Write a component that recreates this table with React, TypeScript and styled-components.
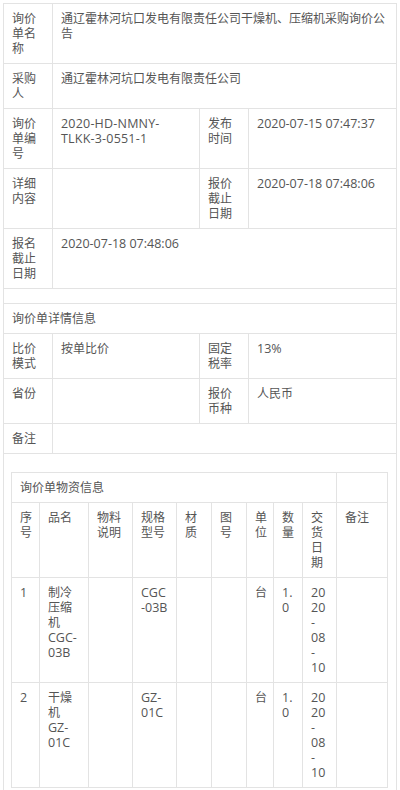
import React from "react";
import styled, { createGlobalStyle } from "styled-components";

const GlobalStyle = createGlobalStyle`
  html, body {
    margin: 0;
    padding: 0;
    background: #ffffff;
  }
  body {
    font-family: "Open Sans", "Noto Sans CJK SC", sans-serif;
    font-size: 12px;
    color: #555555;
  }
`;

const Page = styled.div`
  padding: 3px;
`;

const InfoTable = styled.table`
  border-collapse: collapse;
  table-layout: fixed;
  width: 394px;
`;

const Cell = styled.td`
  border: 1px solid #e3e3e3;
  padding: 7px 8px;
  vertical-align: top;
  line-height: 15px;
  font-size: 12px;
  color: #555555;
`;

const NestCell = styled(Cell)`
  padding: 7px;
`;

const ItemsTable = styled.table`
  border-collapse: collapse;
  table-layout: fixed;
  width: 377px;
  margin-top: 11px;
`;

const ItemCell = styled(Cell)`
  overflow-wrap: anywhere;
`;

/* Latin text (digits, codes) renders a touch larger than the CJK text */
const Latin = styled.span`
  font-family: "Open Sans", sans-serif;
  font-size: 12.5px;
  line-height: 15px;
  vertical-align: top;
`;

/* the inquiry code is set slightly looser */
const Code = styled(Latin)`
  letter-spacing: 0.2px;
`;

/* a date in a narrow column breaks piece by piece at its hyphens */
const DatePiece = styled(Latin)`
  display: inline-block;
  max-width: 100%;
  overflow-wrap: anywhere;
`;

const DateText = ({ value }: { value: string }) => {
  const parts = value.split("-");
  return (
    <>
      {parts.map((p, i) => (
        <DatePiece key={i}>{i < parts.length - 1 ? p + "-" : p}</DatePiece>
      ))}
    </>
  );
};

const outerCols = [49, 147, 49, 148];
const innerCols = [28, 49, 44, 44, 35, 35, 27, 29, 34, 51];

const headers = ["序号", "品名", "物料说明", "规格型号", "材质", "图号", "单位", "数量", "交货日期", "备注"];

type Item = {
  no: string;
  nameCn: string;
  nameCode: string;
  spec: string;
  unit: string;
  qty: string;
  date: string;
};

const items: Item[] = [
  { no: "1", nameCn: "制冷压缩机", nameCode: "CGC-03B", spec: "CGC-03B", unit: "台", qty: "1.0", date: "2020-08-10" },
  { no: "2", nameCn: "干燥机", nameCode: "GZ-01C", spec: "GZ-01C", unit: "台", qty: "1.0", date: "2020-08-10" },
];

export default function App() {
  return (
    <>
      <GlobalStyle />
      <Page>
        <InfoTable>
          <colgroup>
            {outerCols.map((w, i) => (
              <col key={i} style={{ width: w }} />
            ))}
          </colgroup>
          <tbody>
            <tr>
              <Cell>询价单名称</Cell>
              <Cell colSpan={3}>通辽霍林河坑口发电有限责任公司干燥机、压缩机采购询价公告</Cell>
            </tr>
            <tr>
              <Cell>采购人</Cell>
              <Cell colSpan={3}>通辽霍林河坑口发电有限责任公司</Cell>
            </tr>
            <tr>
              <Cell>询价单编号</Cell>
              <Cell>
                <Code>2020-HD-NMNY-TLKK-3-0551-1</Code>
              </Cell>
              <Cell>发布时间</Cell>
              <Cell>
                <Latin>2020-07-15 07:47:37</Latin>
              </Cell>
            </tr>
            <tr>
              <Cell>详细内容</Cell>
              <Cell></Cell>
              <Cell>报价截止日期</Cell>
              <Cell>
                <Latin>2020-07-18 07:48:06</Latin>
              </Cell>
            </tr>
            <tr>
              <Cell>报名截止日期</Cell>
              <Cell colSpan={3}>
                <Latin>2020-07-18 07:48:06</Latin>
              </Cell>
            </tr>
            <tr>
              <Cell colSpan={4}></Cell>
            </tr>
            <tr>
              <Cell colSpan={4}>询价单详情信息</Cell>
            </tr>
            <tr>
              <Cell>比价模式</Cell>
              <Cell>按单比价</Cell>
              <Cell>固定税率</Cell>
              <Cell>
                <Latin>13%</Latin>
              </Cell>
            </tr>
            <tr>
              <Cell>省份</Cell>
              <Cell></Cell>
              <Cell>报价币种</Cell>
              <Cell>人民币</Cell>
            </tr>
            <tr>
              <Cell>备注</Cell>
              <Cell colSpan={3}></Cell>
            </tr>
            <tr>
              <NestCell colSpan={4}>
                <ItemsTable>
                  <colgroup>
                    {innerCols.map((w, i) => (
                      <col key={i} style={{ width: w }} />
                    ))}
                  </colgroup>
                  <tbody>
                    <tr>
                      <ItemCell colSpan={9}>询价单物资信息</ItemCell>
                      <ItemCell></ItemCell>
                    </tr>
                    <tr>
                      {headers.map((h) => (
                        <ItemCell key={h}>{h}</ItemCell>
                      ))}
                    </tr>
                    {items.map((it) => (
                      <tr key={it.no}>
                        <ItemCell>
                          <Latin>{it.no}</Latin>
                        </ItemCell>
                        <ItemCell>
                          {it.nameCn}
                          <Latin>{it.nameCode}</Latin>
                        </ItemCell>
                        <ItemCell></ItemCell>
                        <ItemCell>
                          <Latin>{it.spec}</Latin>
                        </ItemCell>
                        <ItemCell></ItemCell>
                        <ItemCell></ItemCell>
                        <ItemCell>{it.unit}</ItemCell>
                        <ItemCell>
                          <Latin>{it.qty}</Latin>
                        </ItemCell>
                        <ItemCell>
                          <DateText value={it.date} />
                        </ItemCell>
                        <ItemCell></ItemCell>
                      </tr>
                    ))}
                  </tbody>
                </ItemsTable>
              </NestCell>
            </tr>
          </tbody>
        </InfoTable>
      </Page>
    </>
  );
}
